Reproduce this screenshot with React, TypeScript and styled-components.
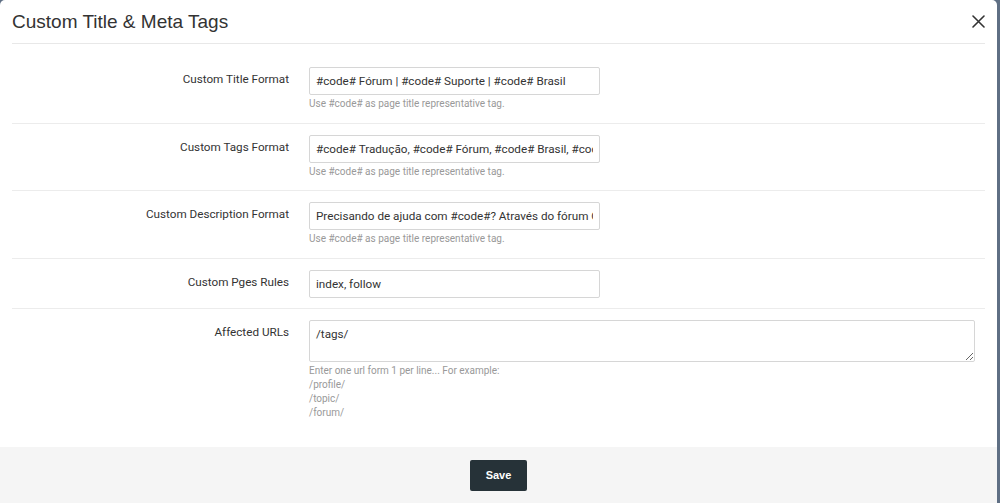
import React from "react";
import styled, { createGlobalStyle } from "styled-components";

const GlobalStyle = createGlobalStyle`
  html, body {
    margin: 0;
    padding: 0;
    background: #5f6f84;
    overflow: hidden;
  }
  * {
    box-sizing: border-box;
  }
`;

type Field = {
  label: string;
  value: string;
  help?: string[];
  multiline?: boolean;
};

const fields: Field[] = [
  {
    label: "Custom Title Format",
    value: "#code# Fórum | #code# Suporte | #code# Brasil",
    help: ["Use #code# as page title representative tag."],
  },
  {
    label: "Custom Tags Format",
    value: "#code# Tradução, #code# Fórum, #code# Brasil, #code# Suporte",
    help: ["Use #code# as page title representative tag."],
  },
  {
    label: "Custom Description Format",
    value:
      "Precisando de ajuda com #code#? Através do fórum Oficial você encontra respostas",
    help: ["Use #code# as page title representative tag."],
  },
  {
    label: "Custom Pges Rules",
    value: "index, follow",
  },
  {
    label: "Affected URLs",
    value: "/tags/",
    multiline: true,
    help: [
      "Enter one url form 1 per line... For example:",
      "/profile/",
      "/topic/",
      "/forum/",
    ],
  },
];

export default function App() {
  return (
    <>
      <GlobalStyle />
      <Modal>
        <Header>
          <Title>Custom Title &amp; Meta Tags</Title>
          <CloseButton aria-label="Close">
            <svg width="13" height="13" viewBox="0 0 13 13">
              <path
                d="M1 1L12 12M12 1L1 12"
                stroke="#333"
                strokeWidth="1.6"
                strokeLinecap="round"
              />
            </svg>
          </CloseButton>
        </Header>

        <Body>
          {fields.map((field) => (
            <Row key={field.label}>
              <Label>{field.label}</Label>
              <Control>
                {field.multiline ? (
                  <TextArea defaultValue={field.value} />
                ) : (
                  <Input defaultValue={field.value} />
                )}
                {field.help && (
                  <Help>
                    {field.help.map((line) => (
                      <div key={line}>{line}</div>
                    ))}
                  </Help>
                )}
              </Control>
            </Row>
          ))}
        </Body>

        <Footer>
          <SaveButton>Save</SaveButton>
        </Footer>
      </Modal>
    </>
  );
}

const Modal = styled.div`
  width: 997px;
  height: 503px;
  background: #fff;
  border-radius: 5px 5px 0 0;
  display: flex;
  flex-direction: column;
  overflow: hidden;
`;

const Header = styled.div`
  flex-shrink: 0;
  margin: 0 12px;
  height: 44px;
  border-bottom: 1px solid #e8e8e8;
  display: flex;
  align-items: center;
  justify-content: space-between;
`;

const Title = styled.h4`
  margin: 0;
  font-family: "Liberation Sans", Arial, sans-serif;
  font-weight: normal;
  font-size: 19px;
  color: #333;
`;

const CloseButton = styled.button`
  border: 0;
  background: none;
  padding: 0;
  display: flex;
  cursor: pointer;
`;

const Body = styled.div`
  flex: 1 0 auto;
  padding: 12px 12px 0;
`;

const Row = styled.div`
  display: grid;
  grid-template-columns: 277px 1fr;
  column-gap: 20px;
  padding: 11px 10px 10px 0;
  border-bottom: 1px solid #ececec;

  &:last-child {
    border-bottom: 0;
  }
`;

const Label = styled.label`
  text-align: right;
  padding-top: 5px;
  font-family: Roboto, "Liberation Sans", sans-serif;
  font-size: 11.7px;
  color: #333;
`;

const Control = styled.div`
  display: flex;
  flex-direction: column;
`;

const Input = styled.input`
  width: 291px;
  height: 28px;
  padding: 0 6px;
  border: 1px solid #d6d6d6;
  border-radius: 2px;
  font-family: Roboto, "Liberation Sans", sans-serif;
  font-size: 11.7px;
  color: #333;
  outline: 0;
`;

const TextArea = styled.textarea`
  width: 100%;
  height: 42px;
  padding: 6px;
  border: 1px solid #d6d6d6;
  border-radius: 2px;
  font-family: Roboto, "Liberation Sans", sans-serif;
  font-size: 11.7px;
  color: #333;
  outline: 0;
  resize: vertical;
  display: block;
`;

const Help = styled.div`
  margin-top: 2px;
  padding-bottom: 1.5px;
  font-family: Roboto, "Liberation Sans", sans-serif;
  font-size: 10px;
  line-height: 14px;
  color: #999;
`;

const Footer = styled.div`
  flex-shrink: 0;
  height: 56px;
  background: #f5f5f5;
  display: flex;
  align-items: center;
  justify-content: center;
`;

const SaveButton = styled.button`
  width: 57px;
  height: 31px;
  border: 0;
  border-radius: 2px;
  background: #263238;
  color: #fff;
  font-family: "Liberation Sans", Arial, sans-serif;
  font-weight: bold;
  font-size: 11px;
  cursor: pointer;
`;
